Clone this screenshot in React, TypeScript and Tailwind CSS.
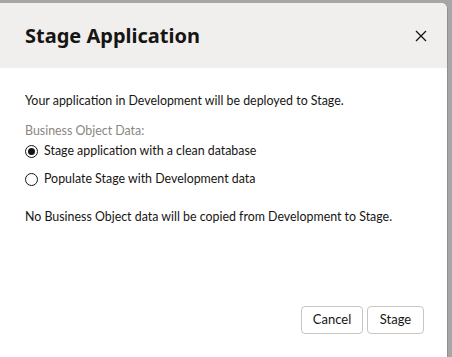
import React from "react";

export default function App() {
  return (
    <div className="w-[452px] h-[357px] bg-[#a6a6a6] overflow-hidden" style={{ fontFamily: 'Lato, sans-serif' }}>
      <div className="mt-[3px] ml-0 w-[448px] h-[360px] bg-white rounded-tr-[6px] flex flex-col border-r border-[#8f8f8f]">
        <div className="h-[65px] bg-[#f1efed] rounded-tr-[6px] flex items-center justify-between pl-[25px] pr-[20px]" style={{ fontFamily: '"Noto Sans", sans-serif' }}>
          <div className="text-[20px] font-bold text-[#161513]">Stage Application</div>
          <svg width="12" height="12" viewBox="0 0 12 12" className="mt-[1px]">
            <path d="M1 1 L11 11 M11 1 L1 11" stroke="#161513" strokeWidth="1.3" />
          </svg>
        </div>
        <div className="pl-[25px] pt-[25px] text-[12.4px] text-[#161513] flex flex-col">
          <div className="leading-[16px]">Your application in Development will be deployed to Stage.</div>
          <div className="mt-[14px] leading-[16px] text-[#8a8782]">Business Object Data:</div>
          <div className="mt-[2px] flex items-center gap-[6px] h-[20px]">
            <span className="w-[13px] h-[13px] rounded-full border border-[#161513] flex items-center justify-center">
              <span className="w-[7px] h-[7px] rounded-full bg-[#161513]" />
            </span>
            <span>Stage application with a clean database</span>
          </div>
          <div className="mt-[8px] flex items-center gap-[6px] h-[20px]">
            <span className="w-[13px] h-[13px] rounded-full border border-[#161513]" />
            <span>Populate Stage with Development data</span>
          </div>
          <div className="mt-[20px] leading-[16px]">No Business Object data will be copied from Development to Stage.</div>
        </div>
        <div className="flex justify-end gap-[4px] pr-[23px] mt-[81px]">
          <button className="h-[28px] w-[62px] rounded-[4px] border border-[#c9c6c2] bg-white text-[13px] text-[#161513]">Cancel</button>
          <button className="h-[28px] w-[57px] rounded-[4px] border border-[#c9c6c2] bg-white text-[13px] text-[#161513]">Stage</button>
        </div>
      </div>
    </div>
  );
}
